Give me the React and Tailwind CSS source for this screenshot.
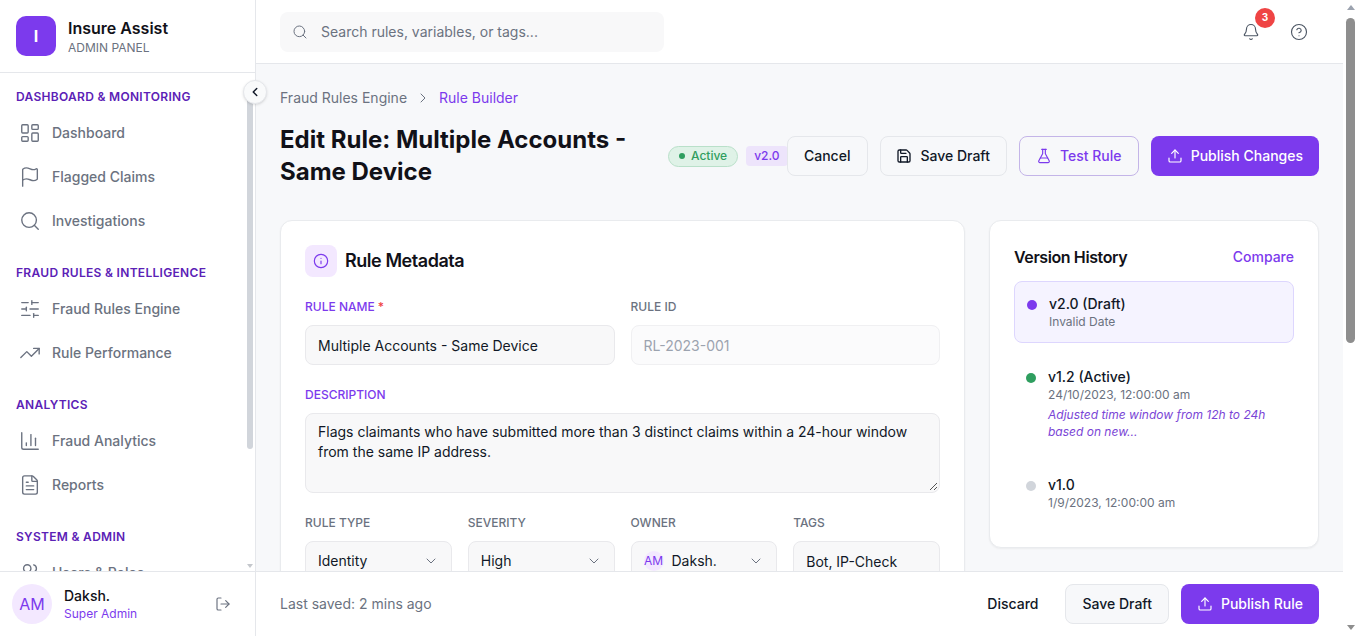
import React from "react";
import { LayoutDashboard, Flag, Search, SlidersHorizontal, TrendingUp, ChartColumn, FileText, Users, LogOut, ChevronLeft, ChevronRight, ChevronDown, Bell, CircleHelp, Save, FlaskConical, Upload, Info } from "lucide-react";

const sections = [
  { title: "DASHBOARD & MONITORING", items: [[LayoutDashboard, "Dashboard"], [Flag, "Flagged Claims"], [Search, "Investigations"]] },
  { title: "FRAUD RULES & INTELLIGENCE", items: [[SlidersHorizontal, "Fraud Rules Engine"], [TrendingUp, "Rule Performance"]] },
  { title: "ANALYTICS", items: [[ChartColumn, "Fraud Analytics"], [FileText, "Reports"]] },
  { title: "SYSTEM & ADMIN", items: [[Users, "Users & Roles"]] },
];

function Sidebar() {
  return (
    <aside className="relative w-[256px] shrink-0 h-full flex flex-col bg-white border-r border-[#e5e7eb]">
      <div className="h-[73px] shrink-0 flex items-center gap-3 px-4 border-b border-[#e5e7eb]">
        <div className="w-10 h-10 rounded-[10px] bg-[#7c3aed] flex items-center justify-center text-white font-bold text-base">I</div>
        <div>
          <div className="text-base font-semibold leading-[24px] text-[#111118]">Insure Assist</div>
          <div className="text-xs leading-[16px] text-[#6b7280]">ADMIN PANEL</div>
        </div>
      </div>
      <div className="flex-1 min-h-0 overflow-hidden flex">
        <nav className="flex-1 pt-4 pl-4 pr-1 flex flex-col gap-[22px]">
          {sections.map((s) => (
            <div key={s.title}>
              <div className="text-xs font-semibold leading-[16px] tracking-wide text-[#5b21b6] mb-[6px]">{s.title}</div>
              <div className="flex flex-col">
                {s.items.map(([Icon, label]) => (
                  <div key={label} className="h-[44px] flex items-center gap-[11px] pl-[3px] text-sm font-medium text-[#6b7280]">
                    <Icon size={22} strokeWidth={1.5} className="text-[#6b7280] shrink-0" />
                    <span>{label}</span>
                  </div>
                ))}
              </div>
            </div>
          ))}
        </nav>
        <div className="w-[6px] mr-[2px] flex flex-col items-center pt-[8px] pb-[3px]">
          <div className="w-[6px] h-[360px] mt-[8px] rounded-b-[3px] bg-[#d1d5db]" />
          <div className="mt-auto w-0 h-0 border-l-[3px] border-r-[3px] border-t-[4px] border-l-transparent border-r-transparent border-t-[#c4c7cc]" />
        </div>
      </div>
      <div className="h-[65px] shrink-0 flex items-center gap-3 pl-3 pr-6 border-t border-[#e5e7eb] bg-white">
        <div className="w-10 h-10 rounded-full bg-[#f3e8ff] flex items-center justify-center text-[#7c3aed] text-base">AM</div>
        <div className="flex-1">
          <div className="text-sm font-medium leading-[20px] text-[#111118]">Daksh.</div>
          <div className="text-xs leading-[16px] text-[#7c3aed]">Super Admin</div>
        </div>
        <LogOut size={16} strokeWidth={1.75} className="text-[#6b7280]" />
      </div>
      <button className="absolute left-[243px] top-[80px] w-6 h-6 rounded-full bg-[#f9fafb] border border-[#e5e7eb] shadow-sm flex items-center justify-center text-[#111827]">
        <ChevronLeft size={14} strokeWidth={2.5} />
      </button>
    </aside>
  );
}

function Label({ children, purple }) {
  return <div className={`text-xs font-medium leading-[16px] mb-[10px] ${purple ? "text-[#7c3aed]" : "text-[#6b7280]"}`}>{children}</div>;
}

const fieldBox = "h-10 rounded-lg border px-3 flex items-center text-sm";
const fieldTone = "border-[#e9e9ec] bg-[#f8f8f9] text-[#111827]";

function SelectField({ label, value, avatar }) {
  return (
    <div className="flex-1 min-w-0">
      <Label>{label}</Label>
      <div className={`${fieldBox} ${fieldTone} justify-between`}>
        <div className="flex items-center gap-2">
          {avatar && <span className="w-5 h-5 rounded-full bg-[#f3e8ff] text-[#7c3aed] text-xs flex items-center justify-center">AM</span>}
          <span>{value}</span>
        </div>
        <ChevronDown size={16} strokeWidth={1.5} className="text-[#6b7280]" />
      </div>
    </div>
  );
}

function Version({ dot, name, date, note, active }) {
  return (
    <div className={`flex gap-[12px] rounded-lg px-3 pt-3 ${note ? "pb-[11px]" : "pb-3"} ${active ? "bg-[#f5f3ff] border border-[#ddd6fe]" : ""}`}>
      <span className={`w-[10px] h-[10px] rounded-full mt-[6px] shrink-0 ${dot}`} />
      <div>
        <div className="text-sm font-medium leading-[20px] text-[#111827]">{name}</div>
        <div className="text-xs leading-[16px] text-[#6b7280]">{date}</div>
        {note && <div className="text-xs leading-[16.5px] italic text-[#7a45d6] mt-[4px]">{note}</div>}
      </div>
    </div>
  );
}

export default function App() {
  return (
    <div className="w-[1358px] h-[636px] flex overflow-hidden bg-[#f7f8fa] text-[#111827]" style={{ fontFamily: "Inter, sans-serif" }}>
      <Sidebar />
      <div className="flex-1 min-w-0 flex flex-col h-full">
        <header className="h-[64px] shrink-0 bg-white border-b border-[#e5e7eb] flex items-center justify-between pl-6 pr-[35px]">
          <div className="w-[384px] h-10 rounded-lg bg-[#f8f8f9] flex items-center gap-[13px] px-3 text-sm text-[#6b7280]">
            <Search size={16} strokeWidth={1.5} className="text-[#6b7280]" />
            <span>Search rules, variables, or tags...</span>
          </div>
          <div className="flex items-center gap-[30px]">
            <div className="relative">
              <Bell size={18} strokeWidth={1.5} className="text-[#4b5563]" />
              <span className="absolute -top-[15px] left-[13px] w-5 h-5 rounded-full bg-[#ef4444] text-white text-[10px] font-bold flex items-center justify-center">3</span>
            </div>
            <CircleHelp size={18} strokeWidth={1.5} className="text-[#4b5563]" />
          </div>
        </header>

        <main className="flex-1 min-h-0 overflow-hidden px-6 pt-6">
          <div className="flex items-center gap-2 text-sm leading-[20px] text-[#6b7280]">
            <span>Fraud Rules Engine</span>
            <ChevronRight size={16} strokeWidth={1.5} />
            <span className="text-[#7c3aed]">Rule Builder</span>
          </div>
          <div className="flex items-center justify-between mt-[16px]">
            <div className="flex items-center min-w-0">
              <h1 className="w-[388px] shrink-0 text-2xl font-bold leading-[32px] text-[#111118]">Edit Rule: Multiple Accounts - Same Device</h1>
              <span className="h-[21px] shrink-0 rounded-full bg-[#dff2e7] border border-[#b9e0c9] px-[10px] flex items-center gap-[6px] text-xs font-medium text-[#2f9e5f]">
                <span className="w-[6px] h-[6px] rounded-full bg-[#2f9e5f]" />Active
              </span>
              <span className="h-[20px] shrink-0 ml-2 rounded bg-[#ede4fb] px-2 flex items-center text-xs font-medium text-[#7c3aed]">v2.0</span>
            </div>
            <div className="flex items-center gap-3 h-10 shrink-0 whitespace-nowrap">
              <button className="h-10 w-[81px] rounded-lg border border-[#e5e7eb] bg-[#f7f8fa] text-sm font-medium text-[#111827]">Cancel</button>
              <button className="h-10 w-[127px] justify-center rounded-lg border border-[#e5e7eb] bg-[#f7f8fa] text-sm font-medium text-[#111827] flex items-center gap-2"><Save size={16} strokeWidth={2} />Save Draft</button>
              <button className="h-10 w-[120px] justify-center rounded-lg border border-[#c4b5e8] bg-[#f7f8fa] text-sm font-medium text-[#7c3aed] flex items-center gap-2"><FlaskConical size={16} strokeWidth={1.75} />Test Rule</button>
              <button className="h-10 px-4 rounded-lg bg-[#7c3aed] text-sm font-medium text-white flex items-center gap-2"><Upload size={16} strokeWidth={1.75} />Publish Changes</button>
            </div>
          </div>

          <div className="flex gap-6 items-start mt-[32px]">
            <section className="flex-1 min-w-0 h-[420px] bg-white rounded-xl border border-[#e9ebee] shadow-xs px-6 pt-6">
              <div className="flex items-center gap-2 mb-[22px]">
                <div className="w-8 h-8 rounded-lg bg-[#f3e8ff] flex items-center justify-center"><Info size={16} strokeWidth={1.75} className="text-[#7c3aed]" /></div>
                <h2 className="text-lg font-semibold leading-[28px] tracking-tight text-[#111118]">Rule Metadata</h2>
              </div>
              <div className="flex gap-4">
                <div className="flex-1">
                  <Label purple>RULE NAME <span className="text-[#ef4444]">*</span></Label>
                  <div className={`${fieldBox} ${fieldTone} pt-[1px]`}>Multiple Accounts - Same Device</div>
                </div>
                <div className="flex-1">
                  <Label>RULE ID</Label>
                  <div className={`${fieldBox} border-[#f0f0f2] bg-[#fbfbfc] text-[#9ca3af] pt-[1px]`}>RL-2023-001</div>
                </div>
              </div>
              <div className="mt-[22px]">
                <Label purple>DESCRIPTION</Label>
                <div className="relative h-20 rounded-lg border border-[#e9e9ec] bg-[#f8f8f9] px-3 py-2 text-sm leading-[20px] text-[#111827]">
                  Flags claimants who have submitted more than 3 distinct claims within a 24-hour window from the same IP address.
                  <svg className="absolute right-[1px] bottom-[1px]" width="10" height="10" viewBox="0 0 10 10"><path d="M9 2 2 9M9 6 6 9" stroke="#555" strokeWidth="1" fill="none" /></svg>
                </div>
              </div>
              <div className="flex gap-4 mt-[22px]">
                <SelectField label="RULE TYPE" value="Identity" />
                <SelectField label="SEVERITY" value="High" />
                <SelectField label="OWNER" value="Daksh." avatar />
                <div className="flex-1 min-w-0">
                  <Label>TAGS</Label>
                  <div className={`${fieldBox} ${fieldTone} pt-[1px]`}>Bot, IP-Check</div>
                </div>
              </div>
            </section>

            <aside className="w-[330px] shrink-0 h-[328px] bg-white rounded-xl border border-[#e9ebee] shadow-xs p-6">
              <div className="flex items-center justify-between mb-[12px]">
                <h3 className="text-base font-semibold leading-[24px] tracking-tight text-[#111118]">Version History</h3>
                <span className="text-sm font-medium text-[#7c3aed]">Compare</span>
              </div>
              <div className="flex flex-col gap-3">
                <Version active dot="bg-[#7c3aed]" name="v2.0 (Draft)" date="Invalid Date" />
                <Version dot="bg-[#2f9e5f]" name="v1.2 (Active)" date="24/10/2023, 12:00:00 am" note="Adjusted time window from 12h to 24h based on new..." />
                <Version dot="bg-[#d1d5db]" name="v1.0" date="1/9/2023, 12:00:00 am" />
              </div>
            </aside>
          </div>
        </main>

        <footer className="h-[65px] shrink-0 bg-white border-t border-[#e5e7eb] flex items-center justify-between pl-6 pr-6">
          <span className="text-sm text-[#6b7280]">Last saved: 2 mins ago</span>
          <div className="flex items-center gap-3">
            <button className="h-10 px-[15px] text-sm font-medium text-[#111827]">Discard</button>
            <button className="h-10 px-4 rounded-lg border border-[#e5e7eb] bg-[#f7f8fa] text-sm font-medium text-[#111827]">Save Draft</button>
            <button className="h-10 px-4 rounded-lg bg-[#7c3aed] text-sm font-medium text-white flex items-center gap-2"><Upload size={16} strokeWidth={1.75} />Publish Rule</button>
          </div>
        </footer>
      </div>
      <div className="w-[15px] shrink-0 h-full bg-white flex flex-col items-center pt-[5px] pb-[6px]">
        <div className="w-0 h-0 border-l-[4px] border-r-[4px] border-b-[5px] border-l-transparent border-r-transparent border-b-[#9ca3af]" />
        <div className="w-[9px] h-[325px] mt-[8px] rounded-full bg-[#8e8e8e]" />
        <div className="mt-auto w-0 h-0 border-l-[4px] border-r-[4px] border-t-[5px] border-l-transparent border-r-transparent border-t-[#8e8e8e]" />
      </div>
    </div>
  );
}
